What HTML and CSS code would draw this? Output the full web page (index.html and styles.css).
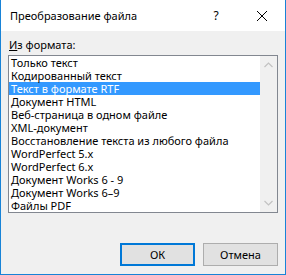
FILE: index.html
```html
<!DOCTYPE html>
<html lang="ru">
<head>
  <meta charset="UTF-8">
  <title>Преобразование файла</title>
  <link rel="stylesheet" href="styles.css">
</head>
<body>
  <div class="dialog">
    <div class="titlebar">
      <span class="title">Преобразование файла</span>
      <span class="title-btn help">?</span>
      <span class="title-btn close">
        <svg width="10" height="10" viewBox="0 0 10 10"><path d="M0 0L10 10M10 0L0 10" stroke="#000" stroke-width="1"/></svg>
      </span>
    </div>
    <div class="content">
      <div class="label"><u>И</u>з формата:</div>
      <div class="listbox">
        <ul class="items">
          <li>Только текст</li>
          <li>Кодированный текст</li>
          <li class="selected">Текст в формате RTF</li>
          <li>Документ HTML</li>
          <li>Веб-страница в одном файле</li>
          <li>XML-документ</li>
          <li>Восстановление текста из любого файла</li>
          <li>WordPerfect 5.x</li>
          <li>WordPerfect 6.x</li>
          <li>Документ Works 6 - 9</li>
          <li>Документ Works 6–9</li>
          <li>Файлы PDF</li>
        </ul>
        <div class="scrollbar">
          <svg width="9" height="6" viewBox="0 0 9 6"><path d="M0.5 5L4.5 1L8.5 5" fill="none" stroke="#c2c2c2" stroke-width="1.2"/></svg>
          <svg width="9" height="6" viewBox="0 0 9 6"><path d="M0.5 1L4.5 5L8.5 1" fill="none" stroke="#c2c2c2" stroke-width="1.2"/></svg>
        </div>
      </div>
      <div class="buttons">
        <button class="btn default">ОК</button>
        <button class="btn">Отмена</button>
      </div>
    </div>
  </div>
</body>
</html>
```

FILE: styles.css
```css
body {
  margin: 0;
  padding: 0;
  font-family: "Noto Sans", "Liberation Sans", sans-serif;
  font-size: 11px;
  color: #000;
  background: #f0f0f0;
}

.dialog {
  width: 286px;
  height: 275px;
  box-sizing: border-box;
  border: 1px solid #1883d7;
  border-top: none;
  display: flex;
  flex-direction: column;
  background: #f0f0f0;
}

.titlebar {
  height: 31px;
  background: #fff;
  display: flex;
  align-items: center;
  flex-shrink: 0;
}

.title {
  flex: 1;
  padding-left: 9px;
  padding-bottom: 1px;
}

.title-btn {
  width: 46px;
  height: 31px;
  display: flex;
  align-items: center;
  justify-content: center;
}

.help {
  font-size: 12px;
}

.content {
  flex: 1;
  display: flex;
  flex-direction: column;
  padding: 6px 7px 8px 7px;
}

.label {
  line-height: 15px;
  margin-bottom: 3px;
  padding-left: 1px;
}

.listbox {
  height: 158px;
  box-sizing: border-box;
  border: 1px solid #828790;
  background: #fff;
  display: flex;
}

.items {
  list-style: none;
  margin: 0;
  padding: 0;
  flex: 1;
}

.items li {
  height: 13px;
  line-height: 13px;
  padding-left: 2px;
  white-space: nowrap;
}

.items li.selected {
  background: #3399ff;
  color: #fff;
}

.scrollbar {
  width: 17px;
  background: #f0f0f0;
  display: flex;
  flex-direction: column;
  justify-content: space-between;
  align-items: center;
  padding: 6px 0;
}

.buttons {
  margin-top: auto;
  display: flex;
  justify-content: flex-end;
  gap: 8px;
}

.btn {
  width: 75px;
  height: 23px;
  box-sizing: border-box;
  border: 1px solid #adadad;
  background: #e1e1e1;
  font-family: inherit;
  font-size: 11px;
  color: #000;
  padding: 0;
}

.btn.default {
  border: 2px solid #0078d7;
}
```
